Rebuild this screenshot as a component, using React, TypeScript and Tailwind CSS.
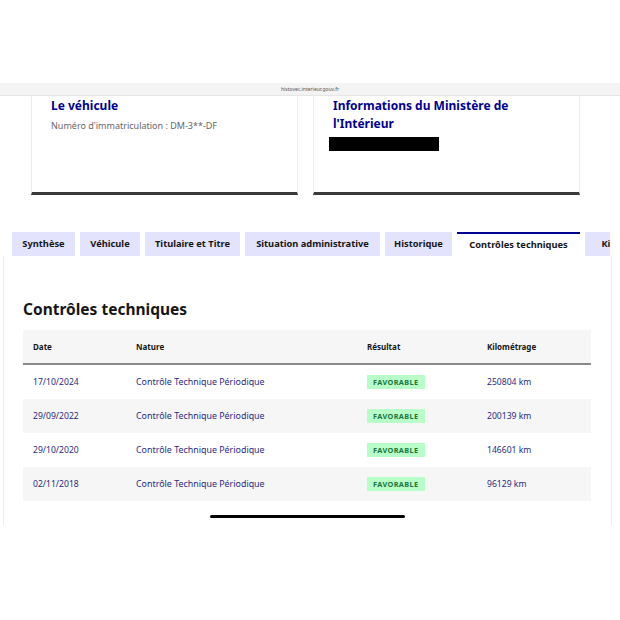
const font = { fontFamily: '"Noto Sans", "Liberation Sans", sans-serif' };

const tabs = [
  { label: "Synthèse", w: "w-[63px]" },
  { label: "Véhicule", w: "w-[60px]" },
  { label: "Titulaire et Titre", w: "w-[95px]" },
  { label: "Situation administrative", w: "w-[135px]" },
  { label: "Historique", w: "w-[67px]" },
  { label: "Contrôles techniques", w: "w-[123px]", active: true },
  { label: "Kilométrage", w: "w-[90px]" },
];

const rows = [
  { date: "17/10/2024", km: "250804 km" },
  { date: "29/09/2022", km: "200139 km" },
  { date: "29/10/2020", km: "146601 km" },
  { date: "02/11/2018", km: "96129 km" },
];

const cols = "grid grid-cols-[103px_231px_120px_1fr] items-center pl-[10px]";

function InfoCard({ children }: { children: React.ReactNode }) {
  return (
    <div className="w-[267px] h-[99px] bg-white border-x border-[#ececec] border-b-[3px] border-b-[#3a3a3a] pl-[19px] pt-[1px]">
      {children}
    </div>
  );
}

export default function App() {
  return (
    <div className="w-[620px] h-[620px] bg-white overflow-hidden" style={font}>
      <div className="h-[83px]" />
      {/* address bar */}
      <div className="h-[13px] bg-[#f3f3f3] border-b border-[#e6e6e6] flex items-center justify-center">
        <span className="text-[5px] text-[#555] leading-none">histovec.interieur.gouv.fr</span>
      </div>

      <div className="relative h-[429px] w-[610px] overflow-hidden">
        <div className="flex gap-[15px] pl-[31px]">
          <InfoCard>
            <div className="text-[12px] font-bold text-[#000091] leading-[18px]">Le véhicule</div>
            <div className="text-[9px] text-[#666] mt-[5px] leading-[12px]">Numéro d'immatriculation : DM-3**-DF</div>
          </InfoCard>
          <InfoCard>
            <div className="text-[12px] font-bold text-[#000091] leading-[18px] w-[200px]">
              Informations du Ministère de l'Intérieur
            </div>
            <div className="w-[110px] h-[14px] bg-black mt-[4px] -ml-[4px]" />
          </InfoCard>
        </div>

        {/* tabs */}
        <div className="flex gap-[5px] pl-[12px] mt-[37px] h-[24px] items-stretch">
          {tabs.map((t) => (
            <div
              key={t.label}
              className={
                t.active
                  ? `${t.w} shrink-0 bg-white border-t-2 border-[#000091] flex items-center justify-center text-[9.3px] font-bold text-[#161616]`
                  : `${t.w} shrink-0 bg-[#e3e3fd] flex items-center justify-center text-[9.3px] font-bold text-[#161616]`
              }
            >
              <span className="whitespace-nowrap">{t.label}</span>
            </div>
          ))}
        </div>

        {/* panel */}
        <div className="ml-[3px] w-[607px] h-[280px] border-l border-[#ececec] pl-[19px] pt-[41px]">
          <h2 className="text-[15.5px] font-bold text-[#161616] leading-[24px]">Contrôles techniques</h2>
          <div className="mt-[9px] w-[568px] text-[8.6px]">
            <div className={`h-[35px] bg-[#f6f6f6] border-b-2 border-[#8a8a8a] ${cols} font-bold text-[#161616] text-[8px]`}>
              <span>Date</span>
              <span>Nature</span>
              <span>Résultat</span>
              <span>Kilométrage</span>
            </div>
            {rows.map((r, i) => (
              <div
                key={r.date}
                className={`h-[34px] ${cols} text-[#2a2a80] ${i % 2 === 1 ? "bg-[#f6f6f6]" : "bg-white"}`}
              >
                <span>{r.date}</span>
                <span className="text-[8.9px]">Contrôle Technique Périodique</span>
                <span>
                  <span className="inline-block bg-[#b8fec9] text-[#18753c] font-bold text-[7.3px] tracking-[0.4px] px-[6px] py-[2px] leading-[10px]">
                    FAVORABLE
                  </span>
                </span>
                <span>{r.km}</span>
              </div>
            ))}
          </div>
        </div>

        {/* home indicator */}
        <div className="absolute left-[210px] top-[419px] w-[195px] h-[3px] rounded-full bg-black" />
      </div>
      <div className="-mt-[269px] ml-[611px] w-px h-[269px] bg-[#ececec]" />
    </div>
  );
}
